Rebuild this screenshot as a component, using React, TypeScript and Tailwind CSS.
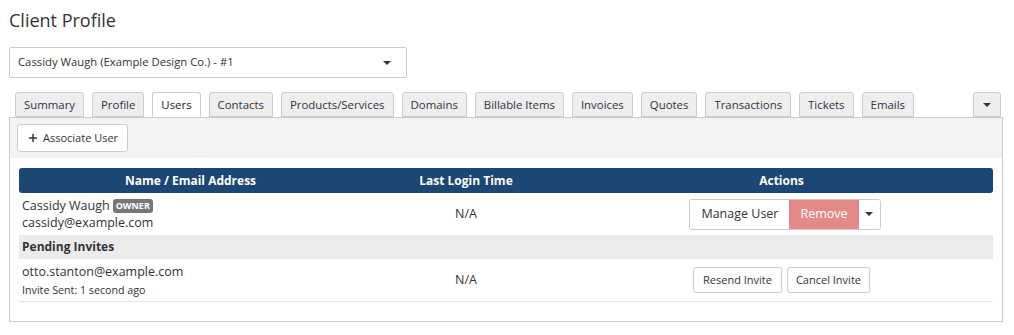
import { Plus } from 'lucide-react';

const tabs = [
  'Summary',
  'Profile',
  'Users',
  'Contacts',
  'Products/Services',
  'Domains',
  'Billable Items',
  'Invoices',
  'Quotes',
  'Transactions',
  'Tickets',
  'Emails',
];

function Caret({ className = '' }: { className?: string }) {
  return (
    <svg width="8" height="4" viewBox="0 0 8 4" className={className}>
      <path d="M0 0h8L4 4z" fill="currentColor" />
    </svg>
  );
}

export default function App() {
  return (
    <div className="min-h-screen bg-white text-[#333] font-['Open_Sans',sans-serif] px-[9px] pt-[7px]">
      <h1 className="text-[18px] leading-[26px] text-[#333]">Client Profile</h1>

      {/* Client selector */}
      <div className="mt-[14px] w-[398px] h-[31px] border border-[#ccc] rounded-[2px] flex items-center justify-between pl-[8px] pr-[15px]">
        <span className="text-[11.3px] text-[#333]">Cassidy Waugh (Example Design Co.) - #1</span>
        <Caret className="text-[#333]" />
      </div>

      {/* Tabs */}
      <div className="mt-[14px] w-[994px] flex items-end pl-[6px] pr-[2px]">
        <div className="flex gap-[8px]">
          {tabs.map((t) => {
            const active = t === 'Users';
            return (
              <div
                key={t}
                className={`h-[25px] px-[8px] flex items-center text-[11.4px] rounded-t-[3px] border border-[#ccc] ${
                  active ? 'bg-white border-b-white text-[#222] -mb-px relative z-10' : 'bg-[#eee] text-[#2c3449]'
                }`}
              >
                {t}
              </div>
            );
          })}
        </div>
        <div className="ml-auto h-[25px] w-[28px] flex items-center justify-center rounded-t-[3px] border border-[#ccc] bg-[#eee] text-[#2c3449]">
          <Caret />
        </div>
      </div>

      {/* Panel */}
      <div className="w-[994px] border border-[#ccc] bg-white pb-[19px]">
        <div className="bg-[#f3f3f3] px-[7px] pt-[6px] pb-[6px]">
          <button className="h-[28px] px-[9px] flex items-center gap-[4px] bg-white border border-[#ccc] rounded-[3px] text-[11px] text-[#333]">
            <Plus size={12} strokeWidth={3} />
            Associate User
          </button>
        </div>

        <div className="px-[9px] pt-[10px]">
          <div className="grid grid-cols-[343px_208px_1fr] h-[25px] bg-[#1c4673] rounded-[3px] text-white text-[12px] font-bold">
            <div className="flex items-center justify-center">Name / Email Address</div>
            <div className="flex items-center justify-center">Last Login Time</div>
            <div className="flex items-center justify-center">Actions</div>
          </div>

          {/* Owner row */}
          <div className="grid grid-cols-[343px_208px_1fr] h-[42px] text-[12.5px]">
            <div className="pl-[3px] flex flex-col justify-center leading-[17px]">
              <div className="flex items-center gap-[3px]">
                Cassidy Waugh
                <span className="bg-[#777] text-white text-[9px] font-bold rounded-[3px] px-[3px] leading-[14px]">OWNER</span>
              </div>
              <div>cassidy@example.com</div>
            </div>
            <div className="flex items-center justify-center">N/A</div>
            <div className="flex items-center justify-center pl-[7px]">
              <div className="flex h-[31px] border border-[#ccc] rounded-[3px] overflow-hidden">
                <div className="px-[11px] flex items-center bg-white">Manage User</div>
                <div className="px-[11px] flex items-center bg-[#e38a89] text-white">Remove</div>
                <div className="w-[21px] flex items-center justify-center bg-white text-[#333]">
                  <Caret />
                </div>
              </div>
            </div>
          </div>

          <div className="h-[24px] bg-[#ebebeb] pl-[3px] flex items-center text-[12px] font-bold text-[#333]">
            Pending Invites
          </div>

          {/* Invite row */}
          <div className="grid grid-cols-[343px_208px_1fr] h-[43px] border-b border-[#e4e4e4] text-[12.5px]">
            <div className="pl-[3px] flex flex-col justify-center">
              <div className="leading-[17px]">otto.stanton@example.com</div>
              <div className="text-[10.7px] leading-[16px] mt-[2px]">Invite Sent: 1 second ago</div>
            </div>
            <div className="flex items-center justify-center pt-[1px]">N/A</div>
            <div className="flex items-center justify-center gap-[5px] text-[11px]">
              <div className="h-[26px] px-[9px] flex items-center border border-[#ccc] rounded-[3px]">Resend Invite</div>
              <div className="h-[26px] px-[8px] flex items-center border border-[#ccc] rounded-[3px]">Cancel Invite</div>
            </div>
          </div>
        </div>
      </div>
    </div>
  );
}
